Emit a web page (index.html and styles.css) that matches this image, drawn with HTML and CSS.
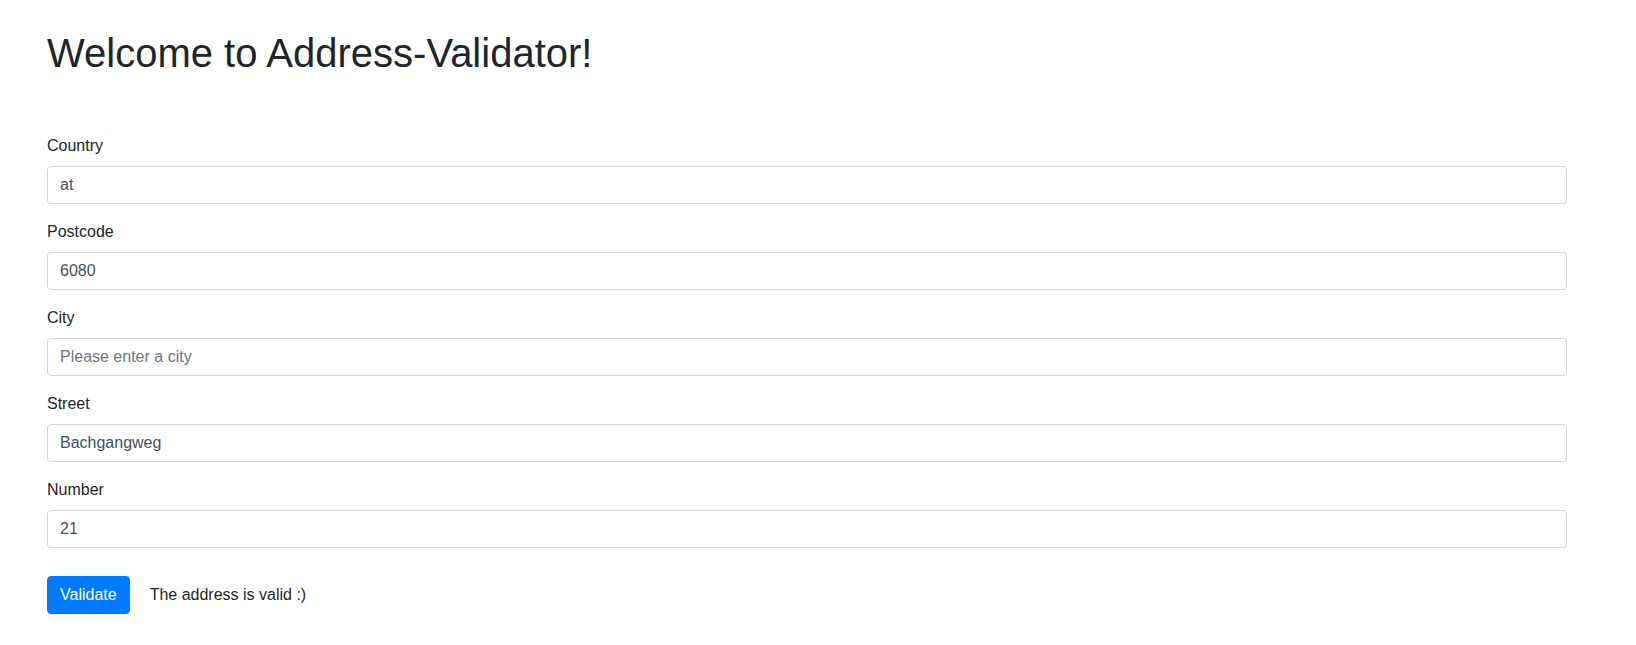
FILE: index.html
```html
<!DOCTYPE html>
<html>
<head>
<meta charset="utf-8">
<link rel="stylesheet" href="styles.css">
</head>
<body>
<div class="page">
  <h1 class="title">Welcome to Address-Validator!</h1>
  <form class="form">
    <div class="group">
      <label class="label">Country</label>
      <input class="input" type="text" value="at">
    </div>
    <div class="group">
      <label class="label">Postcode</label>
      <input class="input" type="text" value="6080">
    </div>
    <div class="group">
      <label class="label">City</label>
      <input class="input" type="text" placeholder="Please enter a city">
    </div>
    <div class="group">
      <label class="label">Street</label>
      <input class="input" type="text" value="Bachgangweg">
    </div>
    <div class="group">
      <label class="label">Number</label>
      <input class="input" type="text" value="21">
    </div>
    <div class="actions">
      <button class="btn" type="button">Validate</button>
      <span class="result">The address is valid :)</span>
    </div>
  </form>
</div>
</body>
</html>
```
FILE: styles.css
```css
* { box-sizing: border-box; }
html, body { margin: 0; padding: 0; background: #fff; }
body {
  font-family: "Liberation Sans", Arial, sans-serif;
  font-size: 16px;
  line-height: 1.5;
  color: #212529;
}
.page {
  padding: 29px 0 0 47px;
  width: 1567px;
}
.title {
  margin: 0 0 57px 0;
  font-size: 40px;
  font-weight: 400;
  line-height: 1.2;
}
.form { display: flex; flex-direction: column; }
.group { margin-bottom: 16px; display: flex; flex-direction: column; }
.label { display: block; margin-bottom: 8px; }
.input {
  display: block;
  width: 100%;
  height: 38px;
  padding: 6px 12px;
  font: inherit;
  color: #495057;
  background: #fff;
  border: 1px solid #ced4da;
  border-radius: 4px;
}
.input::placeholder { color: #6c757d; opacity: 1; }
.actions {
  display: flex;
  align-items: center;
  gap: 20px;
  margin-top: 12px;
}
.btn {
  font: inherit;
  color: #fff;
  background: #007bff;
  border: 1px solid #007bff;
  border-radius: 4px;
  padding: 6px 12px;
  height: 38px;
}
.result { line-height: 24px; }
```
